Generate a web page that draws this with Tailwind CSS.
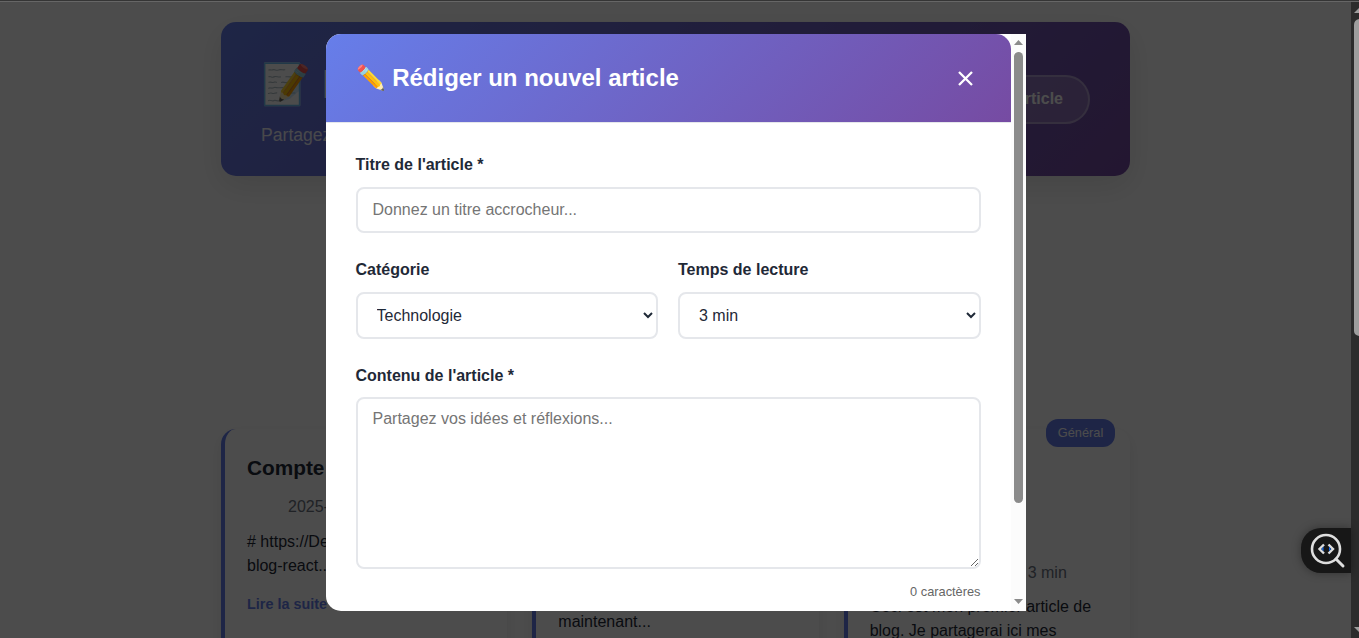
<!DOCTYPE html>
<html lang="fr">
<head>
<meta charset="utf-8">
<title>Mon Blog</title>
<script src="https://cdn.jsdelivr.net/npm/@tailwindcss/browser@4"></script>
</head>
<body class="relative h-[638px] w-[1359px] overflow-hidden bg-white text-base text-[#1f2937] [font-family:'Liberation_Sans',Arial,sans-serif]">
<!-- Page -->
<div class="flex h-full">
  <main class="h-full w-[1351px] overflow-hidden pl-[221px] pt-[22px]">
    <header class="flex h-[154px] w-[909px] items-center justify-between rounded-[15px] bg-[linear-gradient(135deg,#667eea,#764ba2)] px-10 text-white shadow-[0_10px_30px_rgba(0,0,0,0.1)]">
      <div class="pt-1">
        <h1 class="mb-2 flex h-[60px] items-center gap-[11px] text-[40px] font-bold leading-[60px]"><span>📝</span><span>Mon Blog</span></h1>
        <p class="text-[17.6px] leading-[26px] opacity-90">Partagez vos idées</p>
      </div>
      <div class="flex h-[49px] items-center rounded-[25px] border-2 border-white/30 bg-white/20 px-[25px] font-bold">✏️ Nouvel article</div>
    </header>
    <section class="mt-[253px] grid w-[909px] grid-cols-3 gap-[25px]">
      <article class="h-[300px] rounded-[15px] border-l-4 border-[#667eea] pl-[22px] pt-[23px] shadow-[0_5px_15px_rgba(0,0,0,0.08)]">
        <h2 class="text-[20.8px] font-bold leading-[31px]">Compte rendu</h2>
        <p class="mt-[12px] pl-[41px] leading-6 text-[#6b7280]">2025-09-20</p>
        <p class="mt-[11px] leading-6">#&nbsp;https://DevBlog<br>blog-react...</p>
        <p class="mt-[15px] text-[14.4px] font-bold leading-[22px] text-[#667eea]">Lire la suite →</p>
      </article>
      <article class="h-[300px] rounded-[15px] border-l-4 border-[#667eea] pl-[22px] pt-[181px] leading-6 shadow-[0_5px_15px_rgba(0,0,0,0.08)]">maintenant...</article>
      <article class="relative h-[300px] rounded-[15px] border-l-4 border-[#667eea] pl-[22px] pt-[132px] leading-6 shadow-[0_5px_15px_rgba(0,0,0,0.08)]">
        <span class="absolute -top-[10px] right-[15px] flex h-7 w-[69px] items-center justify-center rounded-[12px] bg-[#667eea] text-[12.8px] text-white">Général</span>
        <p class="pl-[158px] text-[#6b7280]">3 min</p>
        <p class="mt-[10px] whitespace-nowrap">Ceci est mon premier article de<br>blog. Je partagerai ici mes</p>
      </article>
    </section>
  </main>
  <div class="h-full w-2 bg-[#2c2c2c]"></div>
</div>

<!-- Backdrop and dialog -->
<div class="absolute inset-y-0 left-0 flex w-[1351px] items-start justify-center border-t border-[#353535] bg-black/70 pt-[33px]">
  <div class="flex h-[577px] w-[700px] overflow-hidden rounded-l-[15px] bg-white">
    <div class="w-[685px]">
      <div class="flex h-[89px] items-center justify-between rounded-tr-[15px] border-b border-[#e5e7eb] bg-[linear-gradient(135deg,#667eea,#764ba2)] px-[30px] text-white">
        <h2 class="whitespace-nowrap text-2xl font-bold">✏️ Rédiger un nouvel article</h2>
        <button class="mr-[7px]" aria-label="Fermer"><svg width="17" height="17" viewBox="0 0 17 17" fill="none" stroke="white" stroke-width="2.3"><path d="M2 2l13 13M15 2L2 15"/></svg></button>
      </div>
      <form class="px-[30px] pt-[30px]">
        <label class="block font-bold leading-6">Titre de l'article *</label>
        <input class="mt-[10px] block h-[46px] w-full rounded-lg border-2 border-[#e5e7eb] px-[15px] placeholder:text-[#757575]" placeholder="Donnez un titre accrocheur...">
        <div class="mt-[25px] grid grid-cols-2 gap-5">
          <div>
            <label class="block font-bold leading-6">Catégorie</label>
            <select class="mt-[10px] block h-[47px] w-full rounded-lg border-2 border-[#e5e7eb] bg-white px-[15px]"><option>Technologie</option></select>
          </div>
          <div>
            <label class="block font-bold leading-6">Temps de lecture</label>
            <select class="mt-[10px] block h-[47px] w-full rounded-lg border-2 border-[#e5e7eb] bg-white px-[15px]"><option>3 min</option></select>
          </div>
        </div>
        <label class="mt-[25px] block font-bold leading-6">Contenu de l'article *</label>
        <textarea class="mt-[9px] block h-[172px] w-full resize-y rounded-lg border-2 border-[#e5e7eb] px-[15px] py-2 placeholder:text-[#757575]" placeholder="Partagez vos idées et réflexions..."></textarea>
        <p class="mt-[13px] text-right text-[12.8px] leading-5 text-[#666]">0 caractères</p>
      </form>
    </div>
    <div class="flex w-[15px] flex-col items-center bg-[#fcfcfc] pt-[6px]">
      <svg width="9" height="5" viewBox="0 0 9 5" fill="#8b8b8b"><path d="M0 5L4.5 0L9 5Z"/></svg>
      <div class="mt-[7px] h-[451px] w-[9px] rounded-full bg-[#8b8b8b]"></div>
      <svg class="mt-[96px]" width="9" height="5" viewBox="0 0 9 5" fill="#8b8b8b"><path d="M0 0L4.5 5L9 0Z"/></svg>
    </div>
  </div>
</div>
<div class="absolute inset-x-0 top-0 h-0.5 border-b border-[#666] bg-[#353535]"></div>

<!-- Page scrollbar -->
<svg class="absolute right-0 top-0" width="8" height="638" viewBox="0 0 8 638" fill="#9e9e9e"><path d="M3 13L8 8V13Z"/><path d="M8 19Q3 20 3 25V331Q3 335 8 336Z"/><path d="M3 627H8V632Z"/></svg>

<!-- Inspector tab -->
<div class="absolute left-[1301px] top-[528px] flex h-[45px] w-[50px] items-center rounded-l-[20px] bg-[#171717] pl-[8px] shadow-[0_0_10px_rgba(0,0,0,0.35)]">
  <svg width="38" height="38" viewBox="0 0 38 38" fill="none"><circle cx="17" cy="17" r="14" stroke="#dedede" stroke-width="2.6"/><path d="M27 27L34 34" stroke="#dedede" stroke-width="3" stroke-linecap="round"/><path d="M15 12.5L10.5 17L15 21.5" stroke="#dedede" stroke-width="2.4"/><path d="M19.5 12.5L24 17L19.5 21.5" stroke="#dedede" stroke-width="2.4"/><path d="M14.5 14.5V19.5L12.5 17ZM20 14.5V19.5L22 17Z" fill="#1768e5"/></svg>
</div>
</body>
</html>
